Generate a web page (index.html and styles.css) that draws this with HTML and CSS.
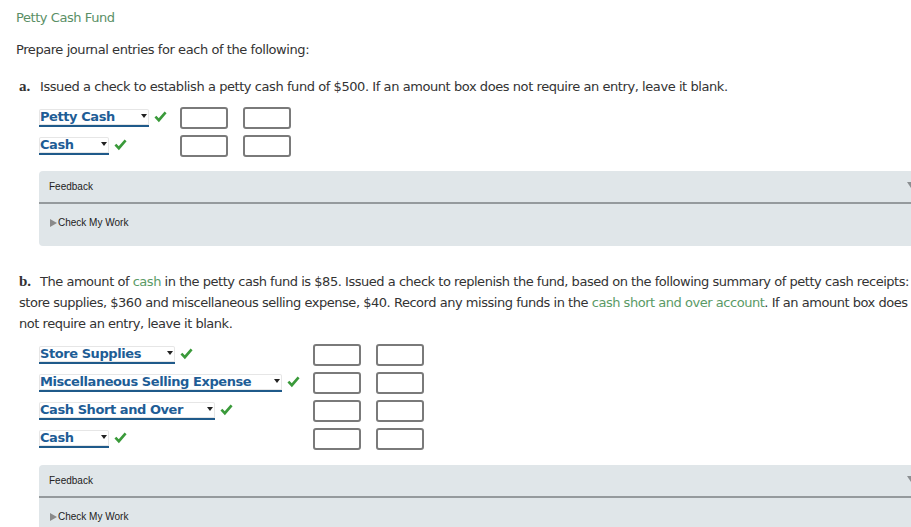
FILE: index.html
```html
<!DOCTYPE html>
<html>
<head>
<meta charset="utf-8">
<link rel="stylesheet" href="styles.css">
</head>
<body>
<div class="page">
  <div class="title">Petty Cash Fund</div>
  <p class="intro">Prepare journal entries for each of the following:</p>

  <div class="part">
    <p class="q"><b class="lbl">a.</b>Issued a check to establish a petty cash fund of $500. If an amount box does not require an entry, leave it blank.</p>
    <div class="rows rows-a">
      <div class="row">
        <div class="acct"><span class="sel w1">Petty Cash<i class="arr"></i></span><svg class="chk" viewBox="0 0 14 14"><path d="M1.5 7.2 L5.2 11 L12.5 2.5" fill="none" stroke="#3a9a3a" stroke-width="2.8"/></svg></div>
        <span class="box"></span><span class="box"></span>
      </div>
      <div class="row">
        <div class="acct"><span class="sel w2">Cash<i class="arr"></i></span><svg class="chk" viewBox="0 0 14 14"><path d="M1.5 7.2 L5.2 11 L12.5 2.5" fill="none" stroke="#3a9a3a" stroke-width="2.8"/></svg></div>
        <span class="box"></span><span class="box"></span>
      </div>
    </div>
    <div class="feedback">
      <div class="fb-head">Feedback<span class="fb-caret"></span></div>
      <div class="fb-body"><span class="tri"></span>Check My Work</div>
    </div>
  </div>

  <div class="part part-b">
    <p class="q qb"><b class="lbl">b.</b>The amount of <span class="link">cash</span> in the petty cash fund is $85. Issued a check to replenish the fund, based on the following summary of petty cash receipts:<br>store supplies, $360 and miscellaneous selling expense, $40. Record any missing funds in the <span class="link">cash short and over account</span>. If an amount box does<br>not require an entry, leave it blank.</p>
    <div class="rows rows-b">
      <div class="row">
        <div class="acct"><span class="sel w3">Store Supplies<i class="arr"></i></span><svg class="chk" viewBox="0 0 14 14"><path d="M1.5 7.2 L5.2 11 L12.5 2.5" fill="none" stroke="#3a9a3a" stroke-width="2.8"/></svg></div>
        <span class="box"></span><span class="box"></span>
      </div>
      <div class="row">
        <div class="acct"><span class="sel w4">Miscellaneous Selling Expense<i class="arr"></i></span><svg class="chk" viewBox="0 0 14 14"><path d="M1.5 7.2 L5.2 11 L12.5 2.5" fill="none" stroke="#3a9a3a" stroke-width="2.8"/></svg></div>
        <span class="box"></span><span class="box"></span>
      </div>
      <div class="row">
        <div class="acct"><span class="sel w5">Cash Short and Over<i class="arr"></i></span><svg class="chk" viewBox="0 0 14 14"><path d="M1.5 7.2 L5.2 11 L12.5 2.5" fill="none" stroke="#3a9a3a" stroke-width="2.8"/></svg></div>
        <span class="box"></span><span class="box"></span>
      </div>
      <div class="row">
        <div class="acct"><span class="sel w2">Cash<i class="arr"></i></span><svg class="chk" viewBox="0 0 14 14"><path d="M1.5 7.2 L5.2 11 L12.5 2.5" fill="none" stroke="#3a9a3a" stroke-width="2.8"/></svg></div>
        <span class="box"></span><span class="box"></span>
      </div>
    </div>
    <div class="feedback">
      <div class="fb-head">Feedback<span class="fb-caret"></span></div>
      <div class="fb-body"><span class="tri"></span>Check My Work</div>
    </div>
  </div>
</div>
</body>
</html>
```

FILE: styles.css
```css
html, body {
  margin: 0;
  padding: 0;
  overflow: hidden;
  background: #fff;
}
body {
  font-family: "DejaVu Sans", Verdana, sans-serif;
  font-size: 13px;
  letter-spacing: -0.43px;
  color: #333;
}
.page {
  width: 930px;
  padding: 9px 0 0 16px;
}
.title {
  color: #5a8f66;
  line-height: 17px;
}
.intro {
  margin: 15px 0 0 0;
  line-height: 17px;
}
.part {
  margin-top: 20px;
}
.q {
  margin: 0;
  line-height: 17px;
  padding-left: 3px;
  white-space: nowrap;
}
.lbl {
  display: inline-block;
  font-family: "Liberation Serif", serif;
  font-size: 15px;
  letter-spacing: 0;
  font-weight: bold;
  width: 21px;
  color: #333;
}
.qb {
  line-height: 21px;
  letter-spacing: -0.47px;
}
.link {
  color: #5a9a66;
}
.rows {
  display: flex;
  flex-direction: column;
  gap: 6px;
  padding-left: 23px;
}
.rows-a {
  margin-top: 12px;
}
.rows-b {
  margin-top: 10px;
}
.row {
  display: flex;
  align-items: center;
  height: 22px;
}
.rows-a .acct { width: 141px; }
.rows-b .acct { width: 274px; }
.acct {
  display: flex;
  align-items: center;
  height: 22px;
}
.sel {
  position: relative;
  display: inline-block;
  box-sizing: border-box;
  height: 18px;
  font-weight: bold;
  color: #1e5d96;
  line-height: 15px;
  padding-left: 1px;
  border-bottom: 2px solid #1f5a8a;
  background: #fff;
  border-radius: 2px 2px 0 0;
  box-shadow: 0 0 0 1px #e6e6e6 inset;
}
.w1 { width: 110px; }
.w2 { width: 70px; }
.w3 { width: 136px; }
.w4 { width: 243px; }
.w5 { width: 176px; }
.arr {
  position: absolute;
  right: 2px;
  top: 5px;
  width: 0;
  height: 0;
  border-left: 3px solid transparent;
  border-right: 3px solid transparent;
  border-top: 4px solid #222;
}
.chk {
  width: 13px;
  height: 13px;
  margin-left: 5px;
  margin-bottom: 3px;
}
.box {
  box-sizing: border-box;
  width: 48px;
  height: 22px;
  border: 2px solid #7a7a7a;
  border-radius: 3px;
  background: #fff;
  margin-right: 15px;
}
.feedback {
  margin: 14px 0 0 23px;
  background: #e0e6e9;
  border-radius: 4px;
  height: 75px;
  font-family: "Liberation Sans", Arial, sans-serif;
  font-size: 10px;
  letter-spacing: 0;
  color: #222;
}
.fb-head {
  position: relative;
  height: 33px;
  line-height: 32px;
  padding-left: 10px;
  box-sizing: border-box;
  border-bottom: 2px solid #959a9d;
}
.fb-caret {
  position: absolute;
  left: 868px;
  top: 11px;
  width: 0;
  height: 0;
  border-left: 4px solid transparent;
  border-right: 4px solid transparent;
  border-top: 6px solid #8b8f92;
}
.fb-body {
  display: flex;
  align-items: center;
  padding: 12px 0 0 11px;
  line-height: 13px;
}
.tri {
  width: 0;
  height: 0;
  border-top: 4px solid transparent;
  border-bottom: 4px solid transparent;
  border-left: 7px solid #8a8a8a;
  margin-right: 1px;
}
.part-b {
  margin-top: 25px;
}
.part-b .feedback {
  margin-top: 15px;
}
```
